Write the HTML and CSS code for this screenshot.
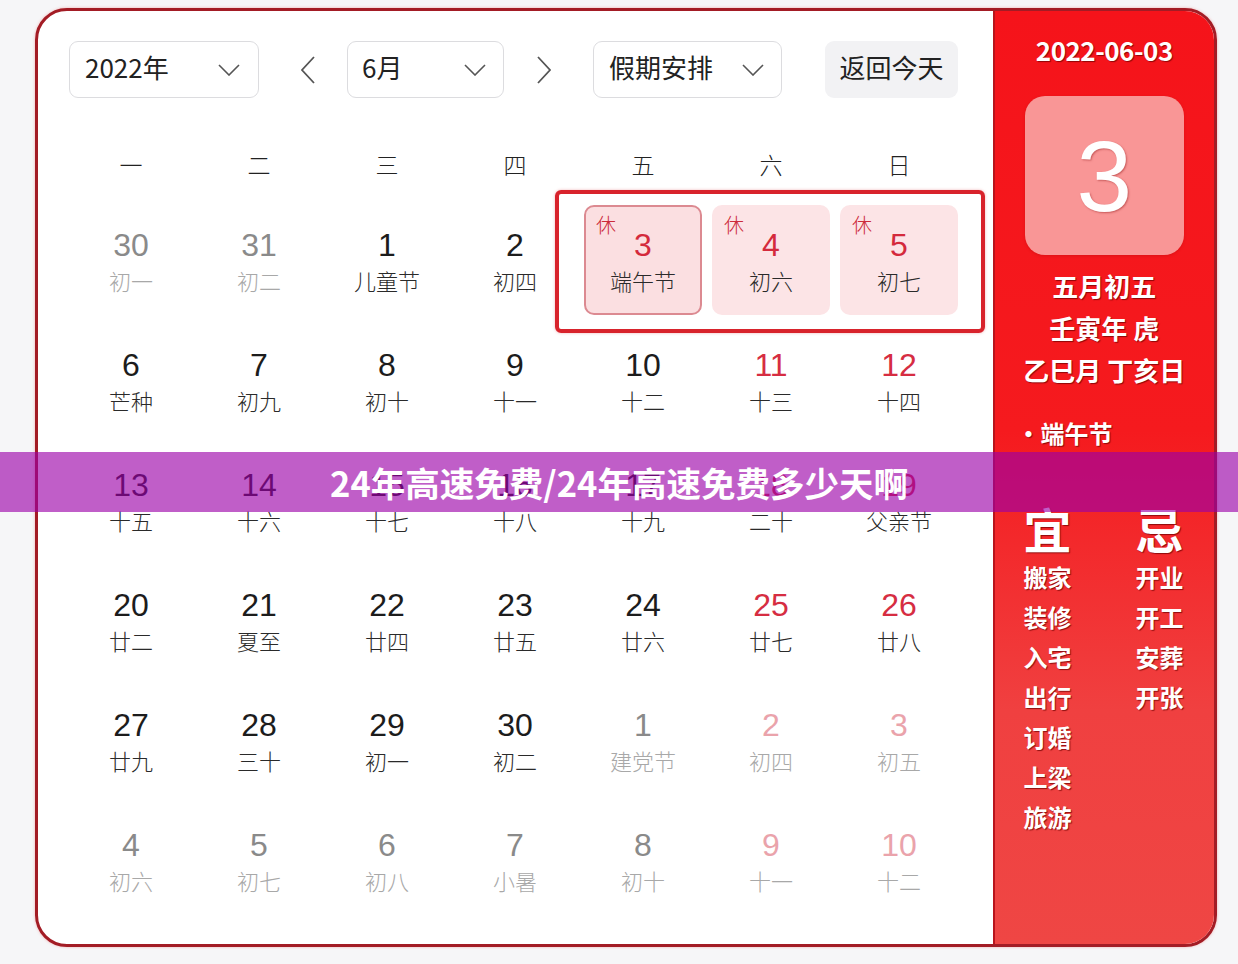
FILE: index.html
```html
<!DOCTYPE html>
<html lang="zh-CN">
<head>
<meta charset="utf-8">
<title>万年历</title>
<link rel="stylesheet" href="styles.css">
</head>
<body>
<div class="page">
  <div class="card">
    <div class="main">
      <div class="toolbar">
        <div class="select sel-year"><span>2022年</span><svg class="chev" viewBox="0 0 22 12"><polyline points="1,1 11,11 21,1"/></svg></div>
        <div class="nav nav-prev"><svg viewBox="0 0 16 28"><polyline points="14,1 2,14 14,27"/></svg></div>
        <div class="select sel-month"><span>6月</span><svg class="chev" viewBox="0 0 22 12"><polyline points="1,1 11,11 21,1"/></svg></div>
        <div class="nav nav-next"><svg viewBox="0 0 16 28"><polyline points="2,1 14,14 2,27"/></svg></div>
        <div class="select sel-holiday"><span>假期安排</span><svg class="chev" viewBox="0 0 22 12"><polyline points="1,1 11,11 21,1"/></svg></div>
        <div class="today-btn">返回今天</div>
      </div>
      <div class="weekdays">
        <span>一</span><span>二</span><span>三</span><span>四</span><span>五</span><span>六</span><span>日</span>
      </div>
      <div class="grid">
        <div class="cell other"><div class="day"><div class="num">30</div><div class="lunar">初一</div></div></div>
        <div class="cell other"><div class="day"><div class="num">31</div><div class="lunar">初二</div></div></div>
        <div class="cell"><div class="day"><div class="num">1</div><div class="lunar">儿童节</div></div></div>
        <div class="cell"><div class="day"><div class="num">2</div><div class="lunar">初四</div></div></div>
        <div class="cell holiday"><div class="day selected"><span class="rest">休</span><div class="num">3</div><div class="lunar">端午节</div></div></div>
        <div class="cell holiday"><div class="day"><span class="rest">休</span><div class="num">4</div><div class="lunar">初六</div></div></div>
        <div class="cell holiday"><div class="day"><span class="rest">休</span><div class="num">5</div><div class="lunar">初七</div></div></div>

        <div class="cell"><div class="day"><div class="num">6</div><div class="lunar">芒种</div></div></div>
        <div class="cell"><div class="day"><div class="num">7</div><div class="lunar">初九</div></div></div>
        <div class="cell"><div class="day"><div class="num">8</div><div class="lunar">初十</div></div></div>
        <div class="cell"><div class="day"><div class="num">9</div><div class="lunar">十一</div></div></div>
        <div class="cell"><div class="day"><div class="num">10</div><div class="lunar">十二</div></div></div>
        <div class="cell weekend"><div class="day"><div class="num">11</div><div class="lunar">十三</div></div></div>
        <div class="cell weekend"><div class="day"><div class="num">12</div><div class="lunar">十四</div></div></div>

        <div class="cell"><div class="day"><div class="num">13</div><div class="lunar">十五</div></div></div>
        <div class="cell"><div class="day"><div class="num">14</div><div class="lunar">十六</div></div></div>
        <div class="cell"><div class="day"><div class="num">15</div><div class="lunar">十七</div></div></div>
        <div class="cell"><div class="day"><div class="num">16</div><div class="lunar">十八</div></div></div>
        <div class="cell"><div class="day"><div class="num">17</div><div class="lunar">十九</div></div></div>
        <div class="cell weekend"><div class="day"><div class="num">18</div><div class="lunar">二十</div></div></div>
        <div class="cell weekend"><div class="day"><div class="num">19</div><div class="lunar">父亲节</div></div></div>

        <div class="cell"><div class="day"><div class="num">20</div><div class="lunar">廿二</div></div></div>
        <div class="cell"><div class="day"><div class="num">21</div><div class="lunar">夏至</div></div></div>
        <div class="cell"><div class="day"><div class="num">22</div><div class="lunar">廿四</div></div></div>
        <div class="cell"><div class="day"><div class="num">23</div><div class="lunar">廿五</div></div></div>
        <div class="cell"><div class="day"><div class="num">24</div><div class="lunar">廿六</div></div></div>
        <div class="cell weekend"><div class="day"><div class="num">25</div><div class="lunar">廿七</div></div></div>
        <div class="cell weekend"><div class="day"><div class="num">26</div><div class="lunar">廿八</div></div></div>

        <div class="cell"><div class="day"><div class="num">27</div><div class="lunar">廿九</div></div></div>
        <div class="cell"><div class="day"><div class="num">28</div><div class="lunar">三十</div></div></div>
        <div class="cell"><div class="day"><div class="num">29</div><div class="lunar">初一</div></div></div>
        <div class="cell"><div class="day"><div class="num">30</div><div class="lunar">初二</div></div></div>
        <div class="cell other"><div class="day"><div class="num">1</div><div class="lunar">建党节</div></div></div>
        <div class="cell other weekend"><div class="day"><div class="num">2</div><div class="lunar">初四</div></div></div>
        <div class="cell other weekend"><div class="day"><div class="num">3</div><div class="lunar">初五</div></div></div>

        <div class="cell other"><div class="day"><div class="num">4</div><div class="lunar">初六</div></div></div>
        <div class="cell other"><div class="day"><div class="num">5</div><div class="lunar">初七</div></div></div>
        <div class="cell other"><div class="day"><div class="num">6</div><div class="lunar">初八</div></div></div>
        <div class="cell other"><div class="day"><div class="num">7</div><div class="lunar">小暑</div></div></div>
        <div class="cell other"><div class="day"><div class="num">8</div><div class="lunar">初十</div></div></div>
        <div class="cell other weekend"><div class="day"><div class="num">9</div><div class="lunar">十一</div></div></div>
        <div class="cell other weekend"><div class="day"><div class="num">10</div><div class="lunar">十二</div></div></div>

        <div class="holiday-frame"></div>
      </div>
    </div>
    <aside class="panel">
      <div class="p-date">2022-06-03</div>
      <div class="p-big"><span>3</span></div>
      <div class="p-line">五月初五</div>
      <div class="p-line">壬寅年 虎</div>
      <div class="p-line">乙巳月 丁亥日</div>
      <div class="p-fest">•端午节</div>
      <div class="p-yiji">
        <div class="p-col">
          <div class="p-head">宜</div>
          <div class="p-item">搬家</div>
          <div class="p-item">装修</div>
          <div class="p-item">入宅</div>
          <div class="p-item">出行</div>
          <div class="p-item">订婚</div>
          <div class="p-item">上梁</div>
          <div class="p-item">旅游</div>
        </div>
        <div class="p-col">
          <div class="p-head">忌</div>
          <div class="p-item">开业</div>
          <div class="p-item">开工</div>
          <div class="p-item">安葬</div>
          <div class="p-item">开张</div>
        </div>
      </div>
    </aside>
  </div>
</div>
<div class="banner">24年高速免费/24年高速免费多少天啊</div>
</body>
</html>
```

FILE: styles.css
```css
* { box-sizing: border-box; }

html, body {
  margin: 0;
  padding: 0;
  background: #f6f6f8;
  font-family: "Noto Sans CJK SC", "Noto Sans", sans-serif;
  color: #222;
}

.page {
  width: 1238px;
  height: 964px;
  padding: 8px 21px 17px 35px;
}

.card {
  display: flex;
  width: 1182px;
  height: 939px;
  border: 3px solid #a31c25;
  border-radius: 32px;
  overflow: hidden;
  background: #fff;
  box-shadow: 0 0 3px rgba(230, 40, 40, 0.35);
}

.main {
  width: 957px;
  padding: 30px 0 0 29px;
}

/* toolbar */
.toolbar {
  display: flex;
  align-items: center;
  height: 57px;
  margin-left: 2px;
}

.select {
  height: 57px;
  border: 1px solid #dcdcdf;
  border-radius: 9px;
  display: flex;
  align-items: center;
  justify-content: space-between;
  font-size: 26px;
  color: #222;
  background: #fff;
}
.select span { line-height: 34px; padding-bottom: 5px; }

.sel-year { width: 190px; padding: 0 18px 0 15px; }
.sel-month { width: 157px; padding: 0 17px 0 14px; }
.sel-holiday { width: 189px; padding: 0 17px 0 15px; }

.chev {
  width: 22px;
  height: 12px;
  fill: none;
  stroke: #555;
  stroke-width: 1.6;
}

.nav {
  height: 57px;
  display: flex;
  align-items: center;
}
.nav svg {
  width: 16px;
  height: 28px;
  fill: none;
  stroke: #555;
  stroke-width: 1.8;
}
.nav-prev { width: 88px; padding-left: 41px; }
.nav-next { width: 89px; padding-left: 32px; }

.today-btn {
  margin-left: 43px;
  width: 133px;
  height: 57px;
  border-radius: 9px;
  background: #f2f2f4;
  display: flex;
  align-items: center;
  justify-content: center;
  font-size: 26px;
  line-height: 34px;
  padding-bottom: 5px;
  color: #222;
}

/* weekdays */
.weekdays {
  display: grid;
  grid-template-columns: repeat(7, 128px);
  margin-top: 44px;
  height: 46px;
  align-items: center;
}
.weekdays span {
  text-align: center;
  font-size: 23px;
  font-weight: 300;
  color: #222;
  padding-bottom: 2px;
}

/* grid */
.grid {
  position: relative;
  display: grid;
  grid-template-columns: repeat(7, 128px);
  grid-auto-rows: 120px;
  margin-top: 12px;
}

.cell {
  padding: 5px;
}

.day {
  position: relative;
  height: 110px;
  border-radius: 10px;
  padding-top: 20px;
  text-align: center;
}

.num {
  font-family: "Liberation Sans", Arial, sans-serif;
  font-size: 32px;
  line-height: 40px;
  color: #1c1c1c;
}

.lunar {
  margin-top: 0;
  font-size: 22px;
  line-height: 30px;
  font-weight: 300;
  color: #2a2a2a;
}

.cell.weekend .num { color: #d62d42; }

.cell.other .num { color: #8a8a8a; }
.cell.other .lunar { color: #a8a8a8; }
.cell.other.weekend .num { color: #eaa3ab; }

.cell.holiday .day {
  background: #fce4e6;
}
.cell.holiday .day.selected {
  background: #fbdfe1;
  border: 2px solid #dc8a91;
  padding-top: 18px;
}
.cell.holiday .num { color: #d42a3c; }

.rest {
  position: absolute;
  left: 12px;
  top: 8px;
  font-size: 20px;
  line-height: 24px;
  color: #cc2b3a;
  font-weight: 300;
}
.day.selected .rest { left: 10px; top: 6px; }

.holiday-frame {
  position: absolute;
  left: 488px;
  top: -10px;
  width: 430px;
  height: 143px;
  border: 4px solid #d8232c;
  border-radius: 6px;
  box-shadow: 0 0 3px rgba(216, 35, 44, 0.35);
  pointer-events: none;
}

/* right panel */
.panel {
  width: 222px;
  background: linear-gradient(to bottom, #f5131a 0%, #f51a1e 45%, #f04040 75%, #ef4644 100%);
  border-left: 2px solid #b8141c;
  color: #fff;
  padding-top: 21px;
  display: flex;
  flex-direction: column;
  align-items: center;
  text-shadow: 1px 1px 1px rgba(110, 0, 0, 0.75);
}

.p-date {
  font-size: 26px;
  line-height: 36px;
  font-weight: 700;
  letter-spacing: -0.5px;
  padding-bottom: 3px;
}

.p-big {
  margin-top: 25px;
  width: 159px;
  height: 159px;
  border-radius: 20px;
  background: #f99696;
  display: flex;
  align-items: center;
  justify-content: center;
  box-shadow: 0 1px 3px rgba(150, 0, 0, 0.25);
}
.p-big span {
  font-family: "Liberation Sans", Arial, sans-serif;
  font-size: 100px;
  line-height: 1;
  color: #fff;
  text-shadow: 1px 1px 2px rgba(150, 30, 30, 0.5);
}

.p-line {
  font-size: 26px;
  line-height: 42px;
  font-weight: 700;
}
.p-date + .p-big + .p-line { margin-top: 10px; }

.p-fest {
  align-self: flex-start;
  margin-left: 22px;
  margin-top: 21px;
  font-size: 24px;
  line-height: 42px;
  font-weight: 700;
}

.p-yiji {
  align-self: flex-start;
  margin-left: 29px;
  margin-top: 46px;
  display: flex;
  gap: 64px;
}

.p-col {
  width: 48px;
  display: flex;
  flex-direction: column;
  align-items: center;
}

.p-head {
  font-size: 48px;
  line-height: 56px;
  font-weight: 700;
}

.p-item {
  font-size: 24px;
  line-height: 40px;
  font-weight: 700;
}
.p-head + .p-item { margin-top: 1px; }

/* overlay banner */
.banner {
  position: absolute;
  left: 0;
  top: 452px;
  width: 1238px;
  height: 60px;
  background: rgba(155, 0, 168, 0.63);
  color: #fff;
  text-align: center;
  font-size: 34.5px;
  font-weight: 700;
  line-height: 60px;
  padding-bottom: 4px;
}
```
